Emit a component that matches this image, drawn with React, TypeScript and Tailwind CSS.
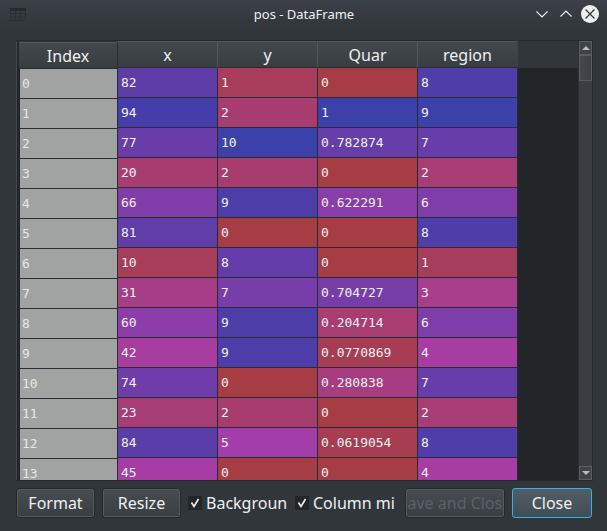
import React from "react";

type Row = [string, string, string, string];

const columns = [
  { name: "x", max: 100 },
  { name: "y", max: 10 },
  { name: "Quar", max: 1 },
  { name: "region", max: 9 },
];

const rows: Row[] = [
  ["82", "1", "0", "8"],
  ["94", "2", "1", "9"],
  ["77", "10", "0.782874", "7"],
  ["20", "2", "0", "2"],
  ["66", "9", "0.622291", "6"],
  ["81", "0", "0", "8"],
  ["10", "8", "0", "1"],
  ["31", "7", "0.704727", "3"],
  ["60", "9", "0.204714", "6"],
  ["42", "9", "0.0770869", "4"],
  ["74", "0", "0.280838", "7"],
  ["23", "2", "0", "2"],
  ["84", "5", "0.0619054", "8"],
  ["45", "0", "0", "4"],
];

// Low values are red, high values are blue.
function cellColor(value: string, max: number) {
  const hue = (0.99 - 0.33 * (Number(value) / max)) * 360;
  return `hsl(${hue} 100% 65% / 0.6)`;
}

const headerCell =
  "border-t border-t-[#53575b] bg-linear-to-b from-[#43484c] to-[#383d41] p-0 text-center text-base font-normal";

const button =
  "h-[30px] shrink-0 overflow-hidden whitespace-nowrap rounded-[3px] border border-[#26292c] bg-linear-to-b from-[#474c50] to-[#393e42] text-base shadow-[inset_0_0_0_1px_#565a5e]";

function TitleBar() {
  return (
    <header className="grid h-7 shrink-0 grid-cols-[1fr_auto_1fr] items-center pl-2 pr-[7px]">
      <svg className="h-[14px] w-[18px]" viewBox="0 0 18 14" aria-hidden="true">
        <path
          d="M2.500 1.500h15v12h-15zM2 6.500h16M2 10h16M7.500 4v10M12.500 4v10"
          fill="none"
          stroke="#2d2e31"
        />
        <path d="M2 1h16v3H2z" fill="#2b2a2b" />
      </svg>
      <h1 className="text-[13px] leading-7">pos - DataFrame</h1>
      <div className="flex items-center justify-end gap-1">
        <button aria-label="Minimize" className="size-5">
          <svg viewBox="0 0 20 20" fill="none" stroke="#eff0f1" strokeWidth="1.2">
            <path d="M4.500 7.500l5.500 5.500 5.500-5.500" />
          </svg>
        </button>
        <button aria-label="Maximize" className="size-5">
          <svg viewBox="0 0 20 20" fill="none" stroke="#eff0f1" strokeWidth="1.2">
            <path d="M4.500 12.500l5.500-5.500 5.500 5.500" />
          </svg>
        </button>
        <button aria-label="Close window" className="size-5">
          <svg viewBox="0 0 20 20" fill="none" stroke="#31363b" strokeWidth="1.3">
            <circle cx="10" cy="10" r="9" fill="#eff0f1" stroke="none" />
            <path d="M5.500 5.500l9 9M14.500 5.500l-9 9" />
          </svg>
        </button>
      </div>
    </header>
  );
}

function IndexTable() {
  return (
    <table className="mt-px w-[99px] shrink-0 table-fixed border-separate border-spacing-0">
      <thead>
        <tr className="h-[27px]">
          <th className={`${headerCell} border-b border-r border-b-[#292d32] border-r-[#292d32]`}>
            Index
          </th>
        </tr>
      </thead>
      <tbody className="font-['DejaVu_Sans_Mono',monospace] text-[13px] leading-4 text-[#e6e7e7]">
        {rows.map((_, i) => (
          <tr key={i} className="h-[30px]">
            <th
              scope="row"
              className="border-b border-l border-r border-b-[#2a2d33] border-l-[#212427] border-r-[#2a2d33] bg-[#a1a3a2] py-0 pl-[2px] text-left font-normal"
            >
              {i}
            </th>
          </tr>
        ))}
      </tbody>
    </table>
  );
}

function DataTable() {
  return (
    <table className="w-[400px] shrink-0 table-fixed border-separate border-spacing-0">
      <thead>
        <tr className="h-[27px]">
          {columns.map((c) => (
            <th
              key={c.name}
              scope="col"
              className={`${headerCell} border-b border-r border-b-[#292d32] border-r-[#53575b] last:border-r-[#3d4145]`}
            >
              {c.name}
            </th>
          ))}
        </tr>
      </thead>
      <tbody className="font-['DejaVu_Sans_Mono',monospace] text-[13px] leading-4">
        {rows.map((row, i) => (
          <tr key={i} className="h-[30px]">
            {row.map((value, j) => (
              <td
                key={j}
                className="border-b border-r border-[#2a2b32] bg-clip-padding py-0 pl-[3px]"
                style={{ backgroundColor: cellColor(value, columns[j].max) }}
              >
                {value}
              </td>
            ))}
          </tr>
        ))}
      </tbody>
    </table>
  );
}

function ScrollBar() {
  const arrow =
    "flex h-[14px] shrink-0 items-center justify-center border border-[#5a5e62] bg-[#3f4347]";
  return (
    <div className="flex w-[14px] shrink-0 flex-col border-l border-[#2b2e32] bg-[#3b3d42]">
      <button aria-label="Scroll up" className={arrow}>
        <svg className="h-1 w-2" viewBox="0 0 8 4" fill="#b9bbbd">
          <path d="M0 4l4-4 4 4z" />
        </svg>
      </button>
      <div className="h-[26px] border border-[#5a5e62] bg-linear-to-r from-[#45494d] to-[#3d4145]" />
      <div className="flex-1" />
      <button aria-label="Scroll down" className={arrow}>
        <svg className="h-1 w-2" viewBox="0 0 8 4" fill="#b9bbbd">
          <path d="M0 0l4 4 4-4z" />
        </svg>
      </button>
    </div>
  );
}

function CheckOption({ label }: { label: string }) {
  return (
    <label className="flex w-[100px] shrink-0 items-center gap-1">
      <span className="grid size-[14px] shrink-0 bg-[#232629]">
        <input
          type="checkbox"
          defaultChecked
          className="peer col-start-1 row-start-1 size-[14px] appearance-none"
        />
        <svg
          className="pointer-events-none invisible col-start-1 row-start-1 size-[14px] peer-checked:visible"
          viewBox="0 0 14 14"
          fill="none"
          stroke="#eff0f1"
          strokeWidth="1.6"
        >
          <path d="M3.500 6.500l2.500 4 4.500-7.500" />
        </svg>
      </span>
      <span className="whitespace-nowrap text-base">{label}</span>
    </label>
  );
}

export default function App() {
  return (
    <main className="flex h-screen flex-col overflow-hidden bg-[#31363b] bg-linear-to-b from-[#3c4148] to-[#31363b] to-[28px] font-['Noto_Sans',sans-serif] text-[#eff0f1]">
      <TitleBar />
      <section className="ml-4 mr-[14px] mt-3 flex min-h-0 flex-1 border border-l-0 border-[#26292d] bg-[#232629]">
        <div className="w-px shrink-0 bg-[#44484d]" />
        <div className="w-[2px] shrink-0 bg-[#24272b]" />
        <div className="flex min-w-0 flex-1 overflow-hidden bg-linear-to-b from-[#31363b] from-[27px] to-[#232629] to-[27px]">
          <IndexTable />
          <DataTable />
        </div>
        <ScrollBar />
      </section>
      <footer className="flex shrink-0 items-center gap-[7px] pb-[13px] pl-4 pr-[15px] pt-[7px]">
        <button className={`${button} w-[79px]`}>Format</button>
        <button className={`${button} w-[79px]`}>Resize</button>
        <CheckOption label="Backgroun" />
        <CheckOption label="Column mi" />
        <button
          disabled
          className={`${button} ml-auto flex w-[100px] items-center justify-center text-[#596169]`}
        >
          Save and Close
        </button>
        <button className="h-[30px] w-[80px] shrink-0 rounded-[3px] border border-[#3daee9] bg-linear-to-b from-[#525e67] to-[#424c54] text-base">
          Close
        </button>
      </footer>
    </main>
  );
}
